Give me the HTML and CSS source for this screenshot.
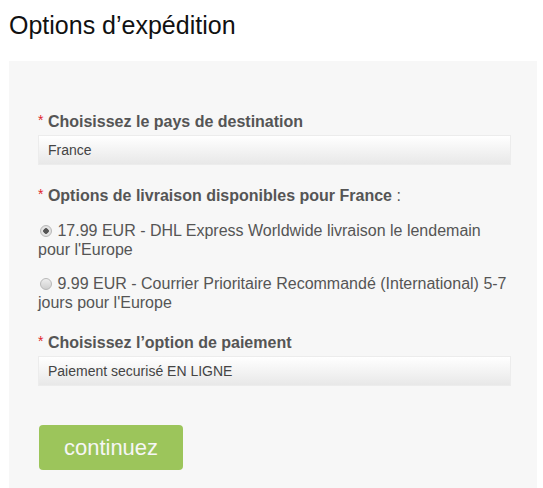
FILE: index.html
```html
<!DOCTYPE html>
<html lang="fr">
<head>
<meta charset="utf-8">
<title>Options d’expédition</title>
<link rel="stylesheet" href="styles.css">
</head>
<body>
<h1 class="title">Options d’expédition</h1>
<div class="panel">
  <div class="field">
    <div class="label"><span class="req">*</span> Choisissez le pays de destination</div>
    <div class="select">France</div>
  </div>
  <div class="field">
    <div class="label"><span class="req">*</span> Options de livraison disponibles pour France <span class="colon">:</span></div>
    <div class="options">
      <label class="option"><input type="radio" name="ship" class="radio" checked> 17.99 EUR - DHL Express Worldwide livraison le lendemain pour l'Europe</label>
      <label class="option"><input type="radio" name="ship" class="radio"> 9.99 EUR - Courrier Prioritaire Recommandé (International) 5-7 jours pour l'Europe</label>
    </div>
  </div>
  <div class="field">
    <div class="label"><span class="req">*</span> Choisissez l’option de paiement</div>
    <div class="select">Paiement securisé EN LIGNE</div>
  </div>
  <button class="btn" type="button">continuez</button>
</div>
</body>
</html>
```
FILE: styles.css
```css
html, body {
  margin: 0;
  padding: 0;
  background: #fff;
}
body {
  font-family: "Liberation Sans", Arial, sans-serif;
  padding: 0 6px 0 9px;
}
.title {
  margin: 11px 0 0 0;
  font-size: 25px;
  font-weight: normal;
  line-height: 28px;
  color: #111;
}
.panel {
  margin-top: 22px;
  background: #f7f7f7;
  padding: 49px 26px 20px 29px;
  min-height: 380px;
}
.field {
  margin-bottom: 19px;
}
.label {
  font-size: 16px;
  font-weight: bold;
  line-height: 20px;
  color: #555;
  margin-bottom: 3px;
}
.req {
  color: #e0262b;
  font-size: 14px;
  font-weight: normal;
  vertical-align: 2px;
}
.colon {
  font-weight: normal;
}
.select {
  height: 30px;
  box-sizing: border-box;
  border: 1px solid #ececec;
  background: linear-gradient(#ffffff, #e8e8e8);
  font-size: 14px;
  line-height: 28px;
  color: #444;
  padding-left: 9px;
}
.options {
  margin-top: 15px;
}
.option {
  display: block;
  font-size: 16px;
  line-height: 19px;
  color: #555;
  margin-bottom: 15px;
}
.radio {
  appearance: none;
  -webkit-appearance: none;
  width: 12px;
  height: 12px;
  margin: 0 1px 0 2px;
  border-radius: 50%;
  border: 1px solid #b8b8b8;
  background: linear-gradient(#eeeeee, #cfcfcf);
  vertical-align: -1px;
  box-sizing: border-box;
  position: relative;
}
.radio:checked {
  background: radial-gradient(circle, #555 0, #555 2.5px, #e6e6e6 3px, #d8d8d8 100%);
}
.btn {
  margin-top: 39px;
  display: block;
  width: 144px;
  height: 45px;
  border: 0;
  border-radius: 4px;
  background: #9cc55b;
  color: #f6f6f6;
  font-family: "Liberation Sans", Arial, sans-serif;
  font-size: 22px;
  padding: 0;
  margin-left: 1px;
}
```
